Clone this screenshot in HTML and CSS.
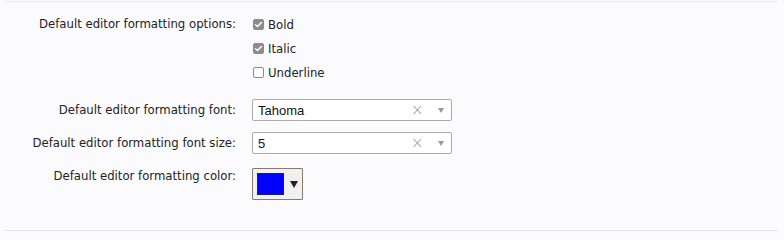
FILE: index.html
```html
<!DOCTYPE html>
<html>
<head>
<meta charset="utf-8">
<link rel="stylesheet" href="styles.css">
</head>
<body>
<div class="panel">
  <div class="row row-options">
    <div class="label">Default editor formatting options:</div>
    <div class="control">
      <label class="check"><span class="box on"><svg viewBox="0 0 11 11" width="11" height="11"><path d="M2.6 5.8 L4.5 7.6 L8.4 3.4" fill="none" stroke="#fff" stroke-width="1.4" stroke-linecap="round" stroke-linejoin="round"/></svg></span>Bold</label>
      <label class="check"><span class="box on"><svg viewBox="0 0 11 11" width="11" height="11"><path d="M2.6 5.8 L4.5 7.6 L8.4 3.4" fill="none" stroke="#fff" stroke-width="1.4" stroke-linecap="round" stroke-linejoin="round"/></svg></span>Italic</label>
      <label class="check"><span class="box"></span>Underline</label>
    </div>
  </div>
  <div class="row row-font">
    <div class="label">Default editor formatting font:</div>
    <div class="control">
      <div class="select"><span class="value">Tahoma</span><span class="clear">×</span><span class="arrow"></span></div>
    </div>
  </div>
  <div class="row row-size">
    <div class="label">Default editor formatting font size:</div>
    <div class="control">
      <div class="select"><span class="value">5</span><span class="clear">×</span><span class="arrow"></span></div>
    </div>
  </div>
  <div class="row row-color">
    <div class="label">Default editor formatting color:</div>
    <div class="control">
      <div class="colorbtn"><span class="swatch"></span><span class="carrow"></span></div>
    </div>
  </div>
</div>
</body>
</html>
```
FILE: styles.css
```css
html, body {
  margin: 0;
  padding: 0;
  background: #fbfbfe;
}
body {
  font-family: "DejaVu Sans Condensed", "DejaVu Sans", sans-serif;
  font-size: 13px;
  color: #222;
}
.panel {
  margin: 1px 7px 0 4px;
  border-top: 1px solid #d9edf3;
  border-bottom: 1px solid #d8e8e5;
  padding-bottom: 30px;
}
.row {
  display: grid;
  grid-template-columns: 232px 1fr;
  column-gap: 16px;
  align-items: start;
}
.label {
  text-align: right;
}
.row-options { margin-top: 10px; }
.row-options .label { line-height: 24px; }
.check {
  display: flex;
  align-items: center;
  height: 24px;
}
.box {
  width: 11px;
  height: 11px;
  box-sizing: border-box;
  border: 1px solid #8a8a8a;
  border-radius: 2px;
  background: #fff;
  margin: 0 4px 0 1px;
  position: relative;
  overflow: hidden;
}
.box.on {
  background: #8c8c8c;
  border-color: #8c8c8c;
}
.box svg {
  position: absolute;
  left: -1px;
  top: -1px;
}
.row-font { margin-top: 15px; }
.row-size { margin-top: 11px; }
.row-font .label, .row-size .label { line-height: 22px; }
.select {
  width: 200px;
  height: 22px;
  box-sizing: border-box;
  border: 1px solid #aaa;
  border-radius: 2px;
  background: #fff;
  display: flex;
  align-items: center;
  font-family: "Liberation Sans", Arial, sans-serif;
  font-size: 13px;
  color: #111;
}
.select .value {
  flex: 1;
  padding-left: 5px;
}
.select .clear {
  color: #999;
  font-family: "DejaVu Sans", sans-serif;
  font-size: 15px;
  font-weight: 200;
  width: 12px;
  text-align: center;
  margin-right: 15px;
}
.select .arrow {
  width: 0;
  height: 0;
  border-left: 3px solid transparent;
  border-right: 3px solid transparent;
  border-top: 5px solid #999;
  margin-right: 7px;
}
.row-color { margin-top: 14px; }
.row-color .label { line-height: 16px; }
.colorbtn {
  width: 51px;
  height: 32px;
  box-sizing: border-box;
  border: 1px solid #8a7a6a;
  border-radius: 1px;
  background: #f0f0f0;
  display: flex;
  align-items: center;
  padding-left: 4px;
}
.swatch {
  width: 27px;
  height: 22px;
  box-sizing: border-box;
  background: #0000ff;
  border: 1px solid #1a1a80;
}
.carrow {
  width: 0;
  height: 0;
  border-left: 4px solid transparent;
  border-right: 4px solid transparent;
  border-top: 7px solid #222;
  margin-left: 6px;
}
```
